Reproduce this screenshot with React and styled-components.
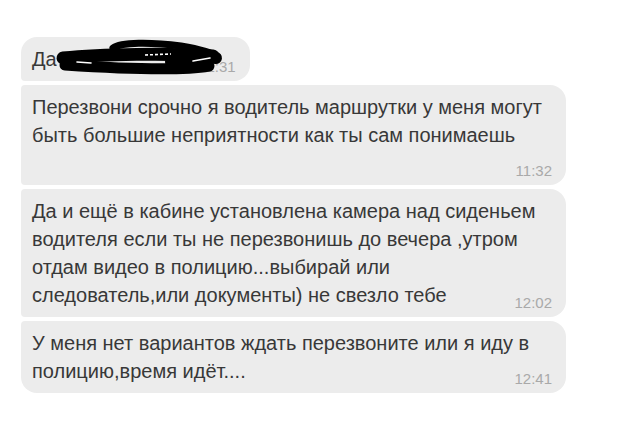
import React from 'react';
import styled, {createGlobalStyle} from 'styled-components';

const Global = createGlobalStyle`
body {
  margin: 0;
  background: #ffffff;
  font-family: "Liberation Sans", Arial, sans-serif;
}
`;

const Chat = styled.div`
display: flex;
flex-direction: column;
align-items: flex-start;
gap: 4px;
padding: 37px 0 0 21px;
`;

const radius = {
  first: '16px 16px 16px 4px',
  middle: '4px 16px 16px 4px',
  last: '4px 16px 16px 16px',
};

const Bubble = styled.div`
position: relative;
display: flow-root;
box-sizing: border-box;
width: fit-content;
max-width: 545px;
padding: 8px 14px 7px 11px;
background: #ececec;
border-radius: ${props => radius[props.$place]};
color: #383838;
font-size: 20px;
line-height: 28px;
`;

const Time = styled.span`
float: right;
margin: 14px 0 0 10px;
font-size: 15px;
line-height: 15px;
color: #a9a9a9;
`;

const Hidden = styled.span`
display: inline-block;
width: 127px;
`;

const Scribble = styled.svg`
position: absolute;
left: 0;
top: 0;
width: 240px;
height: 45px;
pointer-events: none;
`;

const messages = [
  {text: 'Перезвони срочно я водитель маршрутки у меня могут быть большие неприятности как ты сам понимаешь', time: '11:32'},
  {text: 'Да и ещё в кабине установлена камера над сиденьем водителя если ты не перезвонишь до вечера ,утром отдам видео в полицию...выбирай или следователь,или документы) не свезло тебе', time: '12:02'},
  {text: 'У меня нет вариантов ждать перезвоните или я иду в полицию,время идёт....', time: '12:41'},
];

export default function App() {
  return (
    <Chat>
      <Global />
      <Bubble $place="first">
        Да <Hidden />
        <Time>11:31</Time>
        <Scribble viewBox="0 0 240 45">
          <path d="M42 21 C80 17, 150 16, 192 19" stroke="#000" strokeWidth="13" strokeLinecap="round" fill="none" />
          <path d="M44 28 C90 31, 160 34, 188 29" stroke="#000" strokeWidth="11" strokeLinecap="round" fill="none" />
          <path d="M92 11 C100 5, 130 5, 160 9 C178 12, 190 15, 194 19" stroke="#000" strokeWidth="7" strokeLinecap="round" fill="none" />
          <path d="M150 25 C165 22, 180 19, 195 21" stroke="#000" strokeWidth="12" strokeLinecap="round" fill="none" />
          <path d="M56 25 L70 26" stroke="#fff" strokeWidth="1.6" strokeLinecap="round" />
          <path d="M124 18 L150 17" stroke="#fff" strokeWidth="1.6" strokeDasharray="3 2" />
          <path d="M172 24 L189 21" stroke="#fff" strokeWidth="1.6" strokeLinecap="round" />
        </Scribble>
      </Bubble>
      {messages.map((m, i) => (
        <Bubble key={m.time} $place={i === messages.length - 1 ? 'last' : 'middle'}>
          {m.text}
          <Time>{m.time}</Time>
        </Bubble>
      ))}
    </Chat>
  );
}
